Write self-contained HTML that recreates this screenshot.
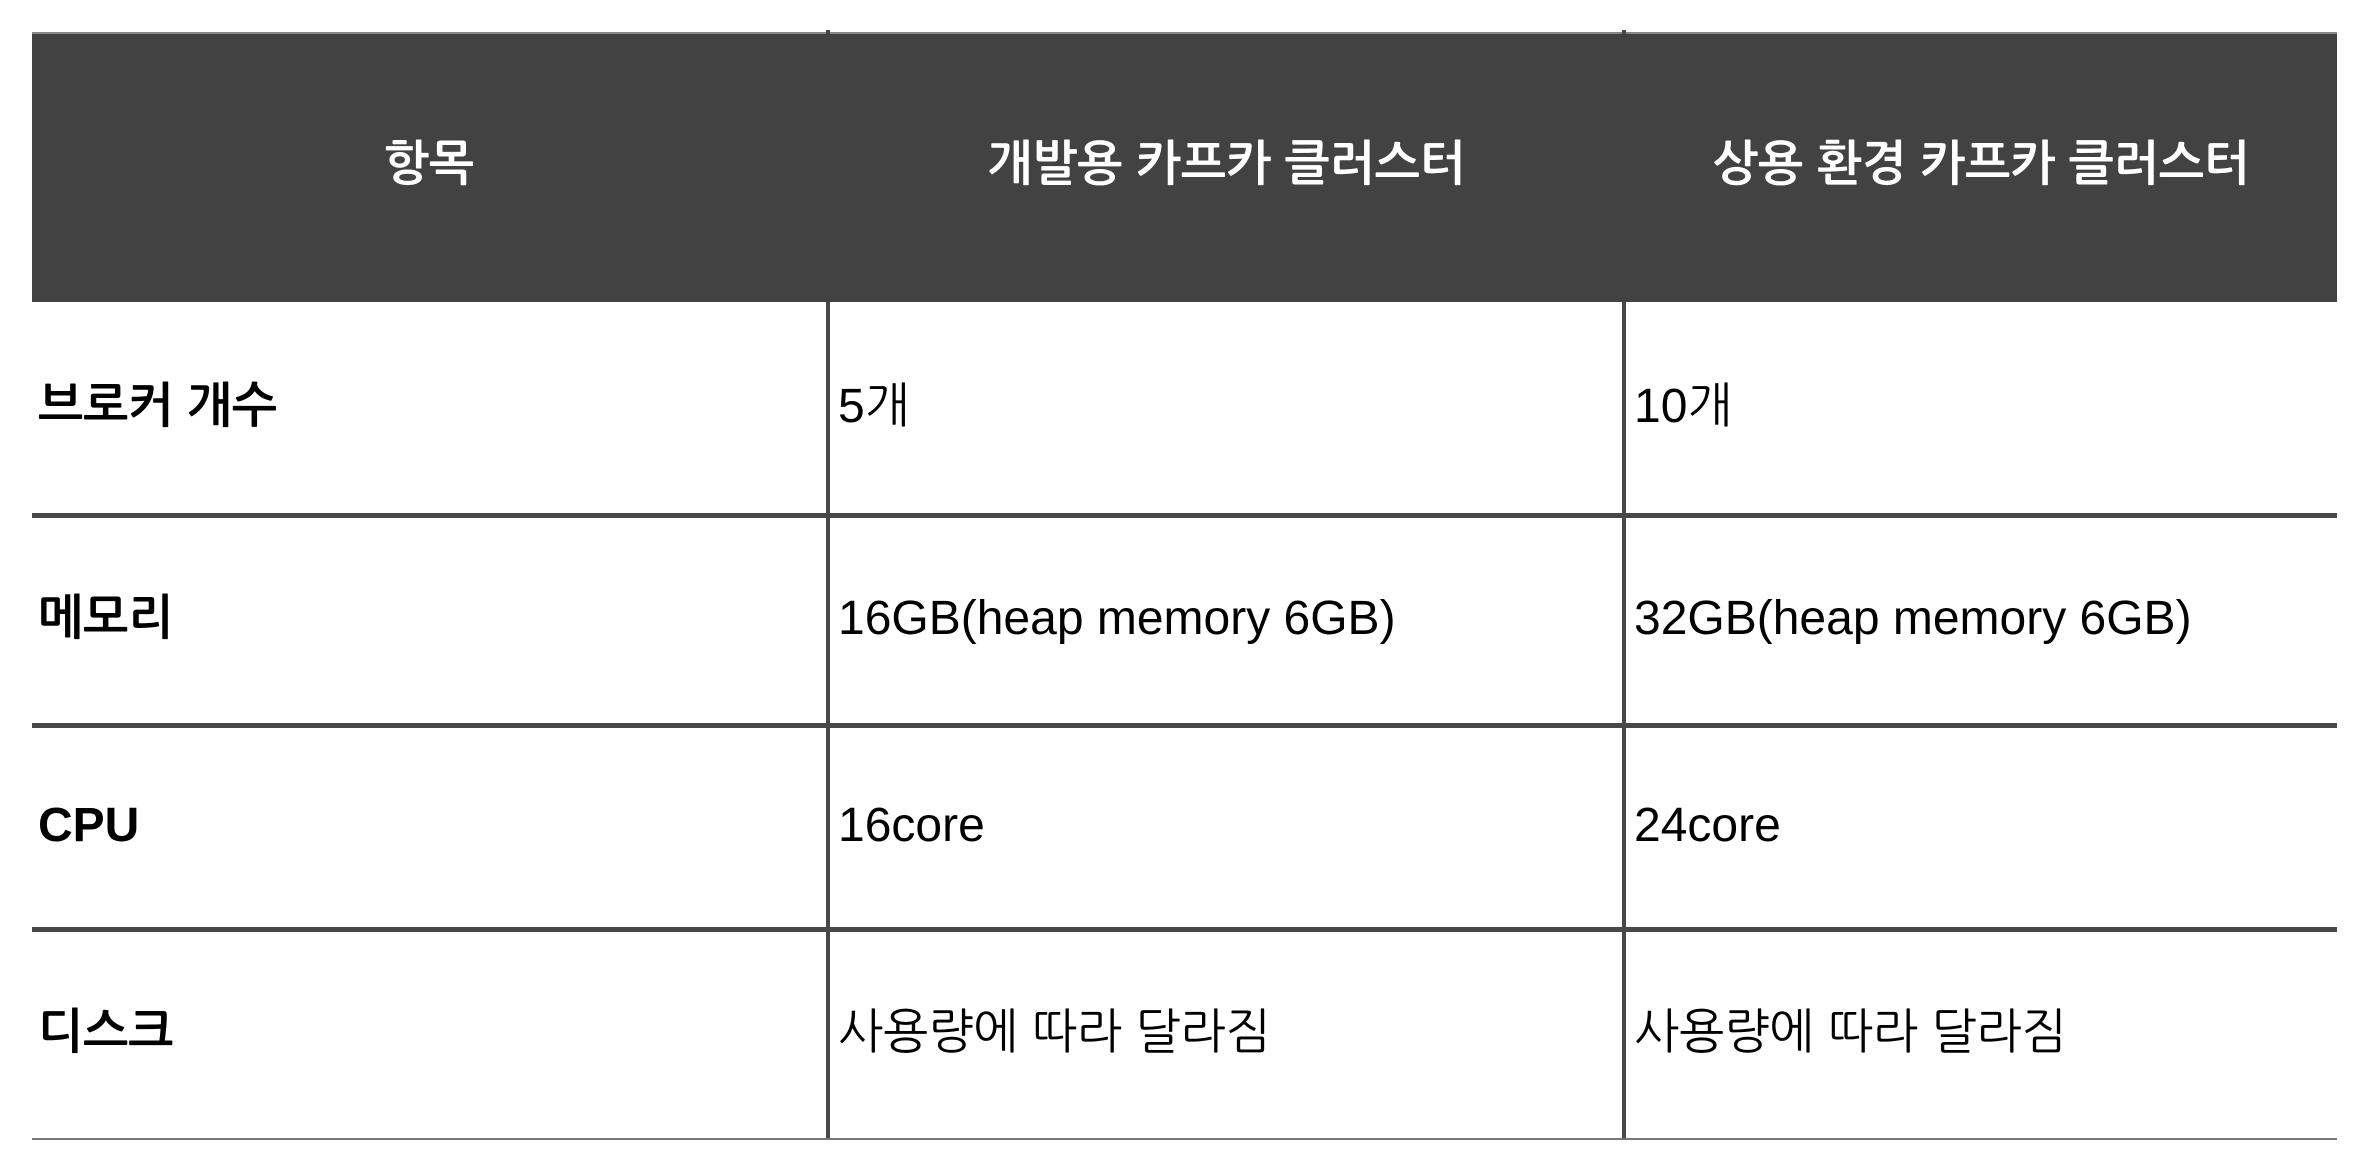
<!DOCTYPE html>
<html><head><meta charset="utf-8"><style>
body{margin:0;width:2360px;height:1172px;background:#fff;position:relative;overflow:hidden;font-family:"Liberation Sans","NanumGothic","Noto Sans CJK KR",sans-serif;}
.a{position:absolute}
.h{background:#424242}
.l{background:#484848}
.t{position:absolute;font-size:48px;color:#000;line-height:1;white-space:nowrap}
.b{font-weight:bold}
.w{color:#fff;font-weight:bold;transform:translateX(-50%)}
</style></head><body>
<div class="a h" style="left:32px;top:33px;width:2305px;height:269px"></div>
<div class="a" style="left:32px;top:32px;width:2305px;height:2px;background:#888"></div>
<div class="a l" style="left:826px;top:30px;width:4px;height:4px"></div>
<div class="a l" style="left:1622px;top:30px;width:4px;height:4px"></div>
<div class="a l" style="left:826px;top:302px;width:4px;height:838px"></div>
<div class="a l" style="left:1622px;top:302px;width:4px;height:838px"></div>
<div class="a l" style="left:32px;top:513px;width:2305px;height:5px"></div>
<div class="a l" style="left:32px;top:723px;width:2305px;height:5px"></div>
<div class="a l" style="left:32px;top:927px;width:2305px;height:5px"></div>
<div class="a" style="left:32px;top:1138px;width:2305px;height:2px;background:#777"></div>

<div class="t w" style="left:429px;top:141px">항목</div>
<div class="t w" style="left:1226px;top:141px">개발용 카프카 클러스터</div>
<div class="t w" style="left:1981px;top:141px">상용 환경 카프카 클러스터</div>

<div class="t b" style="left:38px;top:383px">브로커 개수</div>
<div class="t" style="left:838px;top:383px">5개</div>
<div class="t" style="left:1634px;top:383px">10개</div>

<div class="t b" style="left:38px;top:595px">메모리</div>
<div class="t" style="left:838px;top:595px">16GB(heap memory 6GB)</div>
<div class="t" style="left:1634px;top:595px">32GB(heap memory 6GB)</div>

<div class="t b" style="left:38px;top:802px">CPU</div>
<div class="t" style="left:838px;top:802px">16core</div>
<div class="t" style="left:1634px;top:802px">24core</div>

<div class="t b" style="left:38px;top:1009px">디스크</div>
<div class="t" style="left:838px;top:1009px">사용량에 따라 달라짐</div>
<div class="t" style="left:1634px;top:1009px">사용량에 따라 달라짐</div>
</body></html>
